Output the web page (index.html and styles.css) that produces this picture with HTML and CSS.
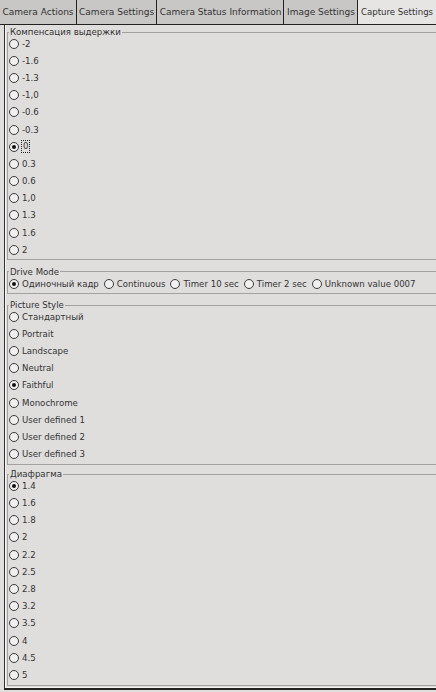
FILE: index.html
```html
<!DOCTYPE html>
<html lang="ru">
<head>
  <meta charset="UTF-8">
  <title>Capture Settings</title>
  <link rel="stylesheet" href="styles.css">
</head>
<body>
  <div class="tabs">
    <div class="tab">Camera Actions</div>
    <div class="tab">Camera Settings</div>
    <div class="tab">Camera Status Information</div>
    <div class="tab">Image Settings</div>
    <div class="tab active">Capture Settings</div>
  </div>

  <div class="pane">
    <fieldset class="group">
      <legend>Компенсация выдержки</legend>
      <div class="opt"><span class="radio"></span>-2</div>
      <div class="opt"><span class="radio"></span>-1.6</div>
      <div class="opt"><span class="radio"></span>-1.3</div>
      <div class="opt"><span class="radio"></span>-1,0</div>
      <div class="opt"><span class="radio"></span>-0.6</div>
      <div class="opt"><span class="radio"></span>-0.3</div>
      <div class="opt"><span class="radio on"></span><span class="focus">0</span></div>
      <div class="opt"><span class="radio"></span>0.3</div>
      <div class="opt"><span class="radio"></span>0.6</div>
      <div class="opt"><span class="radio"></span>1,0</div>
      <div class="opt"><span class="radio"></span>1.3</div>
      <div class="opt"><span class="radio"></span>1.6</div>
      <div class="opt"><span class="radio"></span>2</div>
    </fieldset>

    <fieldset class="group">
      <legend>Drive Mode</legend>
      <div class="row">
        <div class="opt"><span class="radio on"></span>Одиночный кадр</div>
        <div class="opt"><span class="radio"></span>Continuous</div>
        <div class="opt"><span class="radio"></span>Timer 10 sec</div>
        <div class="opt"><span class="radio"></span>Timer 2 sec</div>
        <div class="opt"><span class="radio"></span>Unknown value 0007</div>
      </div>
    </fieldset>

    <fieldset class="group">
      <legend>Picture Style</legend>
      <div class="opt"><span class="radio"></span>Стандартный</div>
      <div class="opt"><span class="radio"></span>Portrait</div>
      <div class="opt"><span class="radio"></span>Landscape</div>
      <div class="opt"><span class="radio"></span>Neutral</div>
      <div class="opt"><span class="radio on"></span>Faithful</div>
      <div class="opt"><span class="radio"></span>Monochrome</div>
      <div class="opt"><span class="radio"></span>User defined 1</div>
      <div class="opt"><span class="radio"></span>User defined 2</div>
      <div class="opt"><span class="radio"></span>User defined 3</div>
    </fieldset>

    <fieldset class="group">
      <legend>Диафрагма</legend>
      <div class="opt"><span class="radio on"></span>1.4</div>
      <div class="opt"><span class="radio"></span>1.6</div>
      <div class="opt"><span class="radio"></span>1.8</div>
      <div class="opt"><span class="radio"></span>2</div>
      <div class="opt"><span class="radio"></span>2.2</div>
      <div class="opt"><span class="radio"></span>2.5</div>
      <div class="opt"><span class="radio"></span>2.8</div>
      <div class="opt"><span class="radio"></span>3.2</div>
      <div class="opt"><span class="radio"></span>3.5</div>
      <div class="opt"><span class="radio"></span>4</div>
      <div class="opt"><span class="radio"></span>4.5</div>
      <div class="opt"><span class="radio"></span>5</div>
    </fieldset>
  </div>
</body>
</html>
```

FILE: styles.css
```css
* {
  box-sizing: border-box;
}

body {
  margin: 0;
  width: 436px;
  height: 692px;
  overflow: hidden;
  background-color: #dfdedd;
  font-family: "DejaVu Sans", sans-serif;
  font-size: 8.6px;
  color: #333;
}

/* tab bar */
.tabs {
  display: flex;
  height: 25px;
  border-bottom: 1px solid #222;
  font-size: 9px;
}

.tab {
  padding: 2px 2px 0 2.5px;
  line-height: 20px;
  background-color: #c8c7c6;
  border-right: 1px solid #222;
  white-space: nowrap;
}

.tab.active {
  flex: 1;
  padding-left: 3px;
  font-size: 8.6px;
  background-color: #e6e5e4;
  border-right: none;
}

/* scroll pane with the groups */
.pane {
  margin-left: 4px;
  height: 665px;
  padding-top: 2px;
  border-left: 1px solid #333;
  border-bottom: 2px solid #222;
  box-shadow: inset 1px 0 0 #f4f4f4, inset 0 -1px 0 #f4f4f4;
}

.group {
  margin: 0 0 6px 2px;
  padding: 0 0 1px 1px;
  border: 1px solid #a3a2a1;
  border-right: none;
  min-width: 0;
}

.group:first-child {
  margin-bottom: 6.5px;
}

.group:nth-child(3) {
  margin-bottom: 4.5px;
}

.group legend {
  padding: 0 1px;
  margin-left: 0;
  line-height: 10px;
  margin-bottom: -2px;
}

.opt {
  display: flex;
  align-items: center;
  height: 17.2px;
  white-space: nowrap;
}

.row {
  display: flex;
  gap: 5px;
}

.radio {
  width: 10px;
  height: 10px;
  margin-right: 3px;
  border: 1px solid #3a3a3a;
  border-radius: 50%;
  background-color: #f0f0f0;
  display: flex;
  align-items: center;
  justify-content: center;
}

.radio.on::after {
  content: "";
  width: 4px;
  height: 4px;
  border-radius: 50%;
  background-color: #111;
}

.focus {
  padding: 0 1px;
  outline: 1px dotted #222;
  line-height: 11px;
}
```
